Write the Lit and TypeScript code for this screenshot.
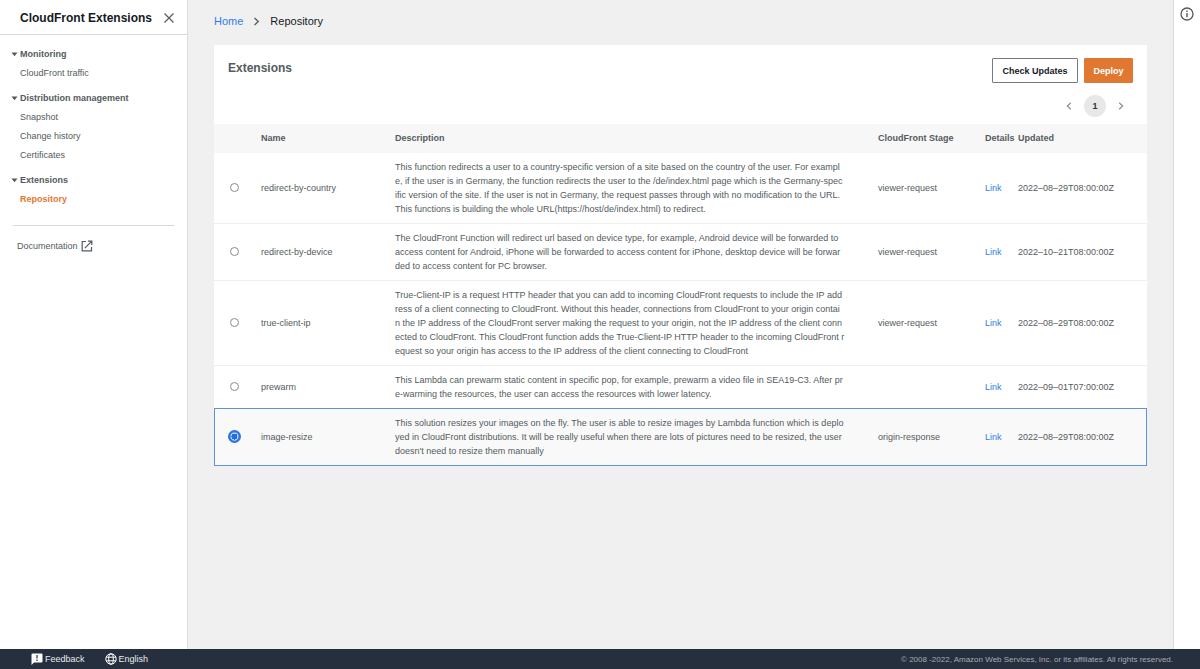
import { LitElement, html, css, svg } from "lit";
import { customElement, state } from "lit/decorators.js";
import { classMap } from "lit/directives/class-map.js";

interface Extension {
  name: string;
  description: string;
  stage: string;
  updated: string;
}

const EXTENSIONS: Extension[] = [
  {
    name: "redirect-by-country",
    description: `This function redirects a user to a country-specific version of a site based on the country of the user. For exampl
e, if the user is in Germany, the function redirects the user to the /de/index.html page which is the Germany-spec
ific version of the site. If the user is not in Germany, the request passes through with no modification to the URL.
This functions is building the whole URL(https://host/de/index.html) to redirect.`,
    stage: "viewer-request",
    updated: "2022–08–29T08:00:00Z",
  },
  {
    name: "redirect-by-device",
    description: `The CloudFront Function will redirect url based on device type, for example, Android device will be forwarded to
access content for Android, iPhone will be forwarded to access content for iPhone, desktop device will be forwar
ded to access content for PC browser.`,
    stage: "viewer-request",
    updated: "2022–10–21T08:00:00Z",
  },
  {
    name: "true-client-ip",
    description: `True-Client-IP is a request HTTP header that you can add to incoming CloudFront requests to include the IP add
ress of a client connecting to CloudFront. Without this header, connections from CloudFront to your origin contai
n the IP address of the CloudFront server making the request to your origin, not the IP address of the client conn
ected to CloudFront. This CloudFront function adds the True-Client-IP HTTP header to the incoming CloudFront r
equest so your origin has access to the IP address of the client connecting to CloudFront`,
    stage: "viewer-request",
    updated: "2022–08–29T08:00:00Z",
  },
  {
    name: "prewarm",
    description: `This Lambda can prewarm static content in specific pop, for example, prewarm a video file in SEA19-C3. After pr
e-warming the resources, the user can access the resources with lower latency.`,
    stage: "",
    updated: "2022–09–01T07:00:00Z",
  },
  {
    name: "image-resize",
    description: `This solution resizes your images on the fly. The user is able to resize images by Lambda function which is deplo
yed in CloudFront distributions. It will be really useful when there are lots of pictures need to be resized, the user
doesn't need to resize them manually`,
    stage: "origin-response",
    updated: "2022–08–29T08:00:00Z",
  },
];

const NAV = [
  { title: "Monitoring", items: ["CloudFront traffic"] },
  { title: "Distribution management", items: ["Snapshot", "Change history", "Certificates"] },
  { title: "Extensions", items: ["Repository"] },
];

const chevron = (d: string, size: number) => html`
  <svg class="stroke" width=${size} height=${size} viewBox="0 0 10 10" aria-hidden="true">${svg`<path d=${d} />`}</svg>
`;
const LEFT = "M6.8 1.8 3.4 5l3.4 3.2";
const RIGHT = "M3.2 1.8 6.6 5 3.2 8.2";

const reset = css`
  * { box-sizing: border-box; }
  svg { display: block; flex: none; }
  .stroke { fill: none; stroke: currentColor; stroke-width: 1.2; }
  a { text-decoration: none; color: inherit; }
  button { font: inherit; color: inherit; background: none; border: 0; padding: 0; margin: 0; cursor: pointer; }
`;

@customElement("side-navigation")
class SideNavigation extends LitElement {
  static styles = [reset, css`
    :host { display: block; background: #fff; border-right: 1px solid #dcdcdc; }
    .head { display: flex; align-items: center; justify-content: space-between; height: 35px; padding: 2px 12px 0 20px; border-bottom: 1px solid #d5d9d9; }
    .title { margin: 0; font-size: 12px; line-height: 16px; color: #16191f; }
    .groups { display: flex; flex-direction: column; gap: 6px; padding-top: 10px; }
    .group { line-height: 19px; }
    summary { display: flex; align-items: center; gap: 2px; padding-left: 11px; font-weight: 700; list-style: none; cursor: pointer; }
    .caret { fill: currentColor; }
    .list { margin: 0; padding: 0 0 0 20px; list-style: none; }
    .link { display: block; }
    .current { color: #e07832; font-weight: 700; }
    .rule { margin: 16px 13px 0; border: 0; border-top: 1px solid #d5dbdb; }
    .docs { display: inline-flex; align-items: center; gap: 3px; margin: 13px 0 0 17px; line-height: 14px; }
  `];

  render() {
    return html`
      <header class="head">
        <h2 class="title">CloudFront Extensions</h2>
        <button aria-label="Close navigation">
          <svg class="stroke" width="12" height="12" viewBox="0 0 12 12"><path d="M1.5 1.5l9 9M10.5 1.5l-9 9" /></svg>
        </button>
      </header>
      <nav class="groups">
        ${NAV.map((g) => html`
          <details class="group" open>
            <summary>
              <svg class="caret" width="7" height="5" viewBox="0 0 7 5" aria-hidden="true"><path d="M.5.5h6L3.5 4.2z" /></svg>
              ${g.title}
            </summary>
            <ul class="list">
              ${g.items.map((i) => html`<li><a href="#" class=${classMap({ link: true, current: i === "Repository" })}>${i}</a></li>`)}
            </ul>
          </details>
        `)}
      </nav>
      <hr class="rule" />
      <a class="docs" href="#">Documentation
        <svg class="stroke" width="12" height="12" viewBox="0 0 12 12" aria-hidden="true">
          <path d="M5 1.5H1.2v9.3h9.3V7M7 1.2h3.8V5M10.6 1.4 3.8 8.2" />
        </svg>
      </a>
    `;
  }
}

@customElement("extension-table")
class ExtensionTable extends LitElement {
  @state() private selected = "image-resize";

  static styles = [reset, css`
    :host { display: block; }
    .table { width: 100%; table-layout: fixed; border-collapse: separate; border-spacing: 0; line-height: 14px; }
    .c-pick { width: 40px; }
    .c-name { width: 134px; }
    .c-stage { width: 107px; }
    .c-details { width: 33px; }
    .c-updated { width: 136px; }
    th { height: 29px; padding: 0 0 1px 7px; text-align: left; white-space: nowrap; background: #f7f7f7; }
    td { padding: 7px 0 7px 7px; border-bottom: 1px solid #eeefef; }
    td:first-child { padding: 0 0 1px; }
    .text { white-space: pre; }
    .link { color: #2f7de8; }
    .pick { display: flex; justify-content: center; }
    .radio { appearance: none; display: grid; place-items: center; width: 9px; height: 9px; margin: 0; border: 1px solid #8a8a8a; border-radius: 50%; background: #fff; }
    .radio:checked { width: 13px; height: 13px; border: 2px solid #2f73dc; background: radial-gradient(circle, #1f6fec 0 3px, #b9d2f8 3px 4px, #6ea2ee 4px); }
    tr:has(+ .selected) td { border-bottom-color: #5d94d1; }
    .selected td { background: #f9f9f9; border-bottom-color: #5d94d1; }
    .selected td:first-child { border-left: 1px solid #5d94d1; }
    .selected td:last-child { border-right: 1px solid #5d94d1; }
  `];

  render() {
    return html`
      <table class="table">
        <colgroup>
          <col class="c-pick" /><col class="c-name" /><col /><col class="c-stage" /><col class="c-details" /><col class="c-updated" />
        </colgroup>
        <thead>
          <tr><th></th><th>Name</th><th>Description</th><th>CloudFront Stage</th><th>Details</th><th>Updated</th></tr>
        </thead>
        <tbody>
          ${EXTENSIONS.map((e) => html`
            <tr class=${classMap({ selected: e.name === this.selected })}>
              <td>
                <label class="pick">
                  <input class="radio" type="radio" name="extension" aria-label=${e.name}
                    .checked=${e.name === this.selected} @change=${() => (this.selected = e.name)} />
                </label>
              </td>
              <td>${e.name}</td>
              <td class="text">${e.description}</td>
              <td>${e.stage}</td>
              <td><a class="link" href="#">Link</a></td>
              <td>${e.updated}</td>
            </tr>
          `)}
        </tbody>
      </table>
    `;
  }
}

@customElement("app-root")
class AppRoot extends LitElement {
  static styles = [reset, css`
    :host { display: flex; flex-direction: column; min-height: 100vh; font-family: "Liberation Sans", Arial, sans-serif; font-size: 9px; color: #545b5e; background: #f0f0f0; }
    .body { flex: 1; display: grid; grid-template-columns: 188px minmax(0, 1fr) 27px; }
    .main { padding: 14px 26px 0; }
    .crumbs { display: flex; align-items: center; gap: 8px; font-size: 11px; line-height: 14px; color: #16191f; }
    .home { color: #2f7de8; }
    .arrow { color: #545b64; }
    .card { margin-top: 17px; background: #fff; }
    .card-head { display: flex; justify-content: space-between; align-items: flex-start; padding: 13px 14px 0; }
    .heading { margin: 2px 0 0; font-size: 12px; line-height: 16px; }
    .actions { display: flex; gap: 6px; }
    .button { height: 25px; min-width: 86px; padding: 0 8px; border: 1px solid #777c82; border-radius: 1px; font-weight: 700; color: #16191f; background: #fff; }
    .primary { min-width: 49px; border-color: #e07832; background: #e07832; color: #fff; }
    .pager { display: flex; justify-content: flex-end; align-items: center; gap: 10px; padding: 12px 21px 7px; color: #8a8f94; }
    .page { width: 22px; height: 22px; border-radius: 50%; background: #e8e8e8; color: #303438; font-weight: 700; }
    .tools { display: flex; justify-content: center; align-items: flex-start; padding-top: 7px; background: #fff; border-left: 1px solid #dcdcdc; }
    .footer { display: flex; align-items: center; gap: 20px; height: 20px; padding: 0 27px 0 31px; background: #262f3e; color: #e8eaed; }
    .foot-item { display: flex; align-items: center; gap: 2px; }
    .legal { margin-left: auto; font-size: 8px; color: #a5abb3; }
  `];

  render() {
    return html`
      <div class="body">
        <side-navigation></side-navigation>
        <main class="main">
          <nav class="crumbs" aria-label="Breadcrumb">
            <a class="home" href="#">Home</a>
            <span class="arrow">${chevron(RIGHT, 11)}</span>
            <span>Repository</span>
          </nav>
          <section class="card">
            <header class="card-head">
              <h1 class="heading">Extensions</h1>
              <div class="actions">
                <button class="button">Check Updates</button>
                <button class="button primary">Deploy</button>
              </div>
            </header>
            <nav class="pager" aria-label="Pages">
              <button aria-label="Previous page">${chevron(LEFT, 10)}</button>
              <button class="page" aria-current="page">1</button>
              <button aria-label="Next page">${chevron(RIGHT, 10)}</button>
            </nav>
            <extension-table></extension-table>
          </section>
        </main>
        <aside class="tools">
          <button aria-label="Information">
            <svg width="14" height="14" viewBox="0 0 14 14">
              <circle cx="7" cy="7" r="6" fill="none" stroke="#545b64" stroke-width="1.3" />
              <path d="M6.3 3.6h1.4V5H6.3zM6.3 6.1h1.4v4.2H6.3z" fill="#545b64" />
            </svg>
          </button>
        </aside>
      </div>
      <footer class="footer">
        <button class="foot-item">
          <svg width="12" height="12" viewBox="0 0 12 12" aria-hidden="true">
            <path d="M1.5.5h9a1 1 0 0 1 1 1v7a1 1 0 0 1-1 1H3L.5 12V1.5a1 1 0 0 1 1-1z" fill="#fff" />
            <path d="M5.4 2h1.2v3.4H5.4zM5.4 6.6h1.2v1.3H5.4z" fill="#262f3e" />
          </svg>
          Feedback
        </button>
        <button class="foot-item">
          <svg width="12" height="12" viewBox="0 0 12 12" fill="none" stroke="#fff" aria-hidden="true">
            <circle cx="6" cy="6" r="5.2" /><ellipse cx="6" cy="6" rx="2.3" ry="5.2" /><path d="M1.2 4.2h9.6M1.2 7.8h9.6" />
          </svg>
          English
        </button>
        <span class="legal">© 2008 -2022, Amazon Web Services, Inc. or its affiliates. All rights reserved.</span>
      </footer>
    `;
  }
}
